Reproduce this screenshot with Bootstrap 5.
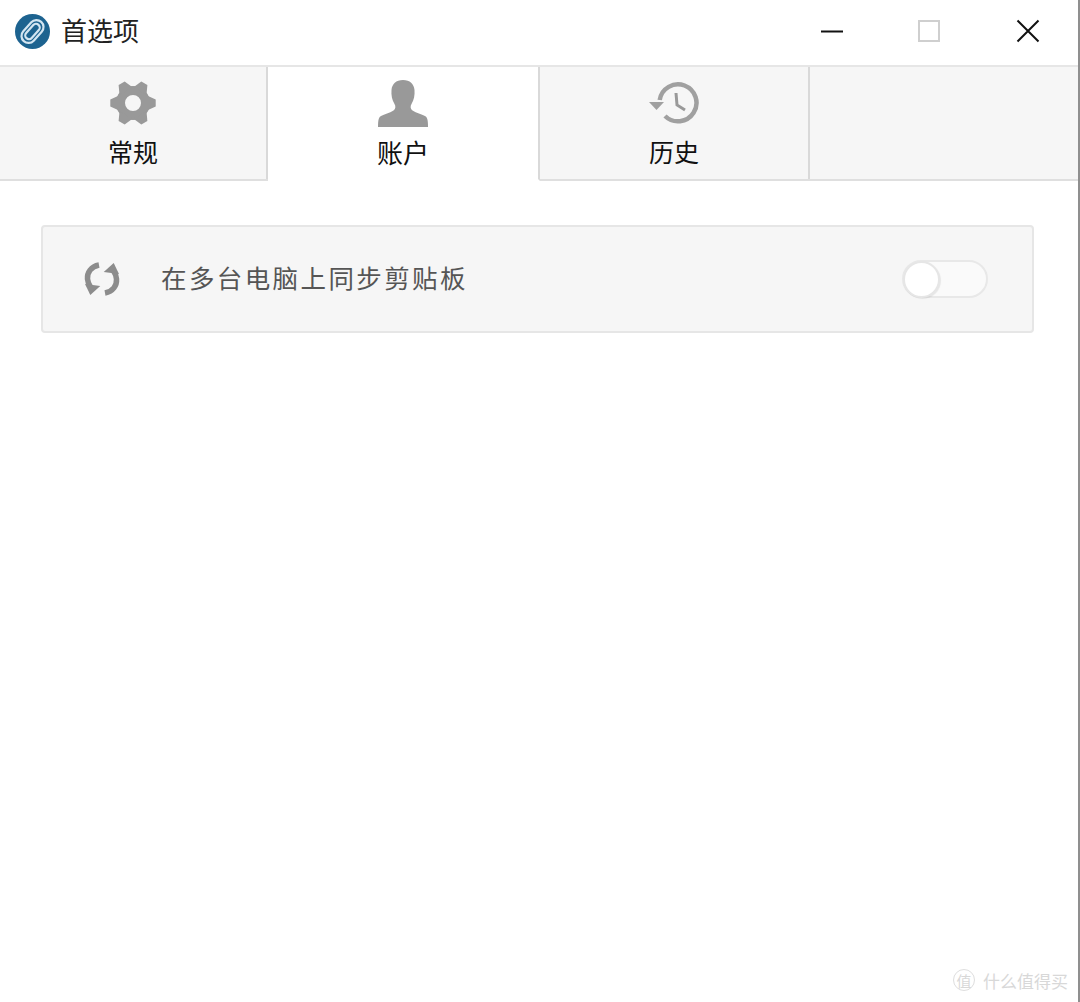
<!DOCTYPE html>
<html lang="zh-CN">

<head>
    <meta charset="UTF-8">
    <meta name="viewport" content="width=device-width, initial-scale=1.0">
    <title>首选项</title>

    <link href="https://cdn.jsdelivr.net/npm/bootstrap@5.3.0/dist/css/bootstrap.min.css" rel="stylesheet">
    <style>
        html, body { height: 100%; }
        body { font-family: "Noto Sans CJK SC", "Liberation Sans", sans-serif; background: #fff; color: #111; }
        .app-window { width: 1080px; height: 1002px; border-right: 2px solid #8f8f8f; }
        .title-bar { height: 65px; padding: 0 0 3px 15px; }
        .title-text { font-size: 26px; line-height: 1; margin: 0 0 3px 11px; color: #222; }
        .win-btn { width: 24px; height: 24px; }
        .win-min { margin-right: 73px; }
        .win-max { margin-right: 75px; }
        .win-close { margin-right: 38px; }
        .tabs { height: 116px; background: #f6f6f6; border-top: 2px solid #e6e6e6; border-bottom: 2px solid #dfdfdf; }
        .tabs .nav-link { height: 112px; padding: 13px 0 0; color: #111; font-size: 25px; line-height: 1; border-right: 2px solid #d9d9d9; border-radius: 0; }
        .tabs .nav-link svg { display: block; margin: 0 auto 13px; }
        .tabs .nav-link.active { background: #fff; color: #111; height: 114px; font-size: 26px; border-bottom: 2px solid #fff; }
        .tabs .nav-link.active svg { margin-bottom: 12px; }
        .tab-1 { width: 268px; }
        .tab-2 { width: 272px; }
        .tab-3 { width: 270px; }
        .pane { padding: 44px 44px 0 41px; }
        .sync-card { height: 108px; background: #f6f6f6; border: 2px solid #e6e6e6; border-radius: 4px; padding: 0 44px 0 40px; }
        .sync-text { font-size: 25.5px; color: #555; margin: 0 0 4px 40px; letter-spacing: 2.4px; line-height: 1; }
        .switch-track { width: 86px; height: 38px; background: #fafafa; border: 2px solid #e8e8e8; border-radius: 19px; position: relative; }
        .switch-knob { width: 37px; height: 37px; background: #fff; border: 2px solid #e6e6e6; border-radius: 50%; position: absolute; left: -1px; top: -1px; box-shadow: 1px 1px 1px rgba(0,0,0,.08); }
        .watermark { position: absolute; right: 10px; bottom: 11px; color: #d8d8d8; font-size: 17px; line-height: 1; }
        .watermark-mark { width: 22px; height: 22px; border: 1px solid #dedede; border-radius: 50%; font-size: 15px; margin-right: 8px; }
    </style>
</head>

<body>

    <div class="app-window position-relative d-flex flex-column">
        <!-- title bar -->
        <div class="title-bar d-flex align-items-center justify-content-between">
            <div class="d-flex align-items-center">
                <svg width="35" height="35" viewBox="0 0 35 35" fill="none">
                    <circle cx="17.5" cy="17.5" r="17.500" fill="#1d6390"/>
                    <g transform="rotate(-48 17.500 17.500)" stroke="#d3e5f1" stroke-width="2.200">
                        <rect x="4.500" y="10.500" width="26" height="14" rx="7"/>
                        <rect x="8.500" y="13.800" width="18" height="7.400" rx="3.700"/>
                    </g>
                </svg>
                <span class="title-text">首选项</span>
            </div>
            <div class="d-flex align-items-center">
                <svg class="win-btn win-min" viewBox="0 0 24 24"><path d="M1 12.500 H23" stroke="#111" stroke-width="2"/></svg>
                <svg class="win-btn win-max" viewBox="0 0 24 24"><rect x="2" y="2" width="20" height="20" fill="none" stroke="#cfcfcf" stroke-width="2"/></svg>
                <svg class="win-btn win-close" viewBox="0 0 24 24"><path d="M1.500 1.500 L22.500 22.500 M22.500 1.500 L1.500 22.500" stroke="#111" stroke-width="2"/></svg>
            </div>
        </div>

        <!-- tabs -->
        <ul class="nav tabs flex-nowrap">
            <li class="nav-item tab-1">
                <a class="nav-link text-center" href="#">
                    <svg width="46" height="46" viewBox="0 0 46 46">
                        <circle cx="23" cy="23" r="12.500" fill="none" stroke="#999" stroke-width="9"/>
                        <g fill="#999">
                            <polygon points="37,15.500 45.700,19.500 45.700,26.500 37,30.500"/>
                            <polygon points="37,15.500 45.700,19.500 45.700,26.500 37,30.500" transform="rotate(60 23 23)"/>
                            <polygon points="37,15.500 45.700,19.500 45.700,26.500 37,30.500" transform="rotate(120 23 23)"/>
                            <polygon points="37,15.500 45.700,19.500 45.700,26.500 37,30.500" transform="rotate(180 23 23)"/>
                            <polygon points="37,15.500 45.700,19.500 45.700,26.500 37,30.500" transform="rotate(240 23 23)"/>
                            <polygon points="37,15.500 45.700,19.500 45.700,26.500 37,30.500" transform="rotate(300 23 23)"/>
                        </g>
                    </svg>
                    <span>常规</span>
                </a>
            </li>
            <li class="nav-item tab-2">
                <a class="nav-link active text-center" href="#">
                    <svg width="50" height="47" viewBox="0 0 50 47">
                        <path fill="#999" d="M25 0c7 0 11 4 11.500 10 .4 5-.5 10-3 14-1.500 2.500-1 5 1 6.500 4 2.500 9 3.500 12.500 5.500 2 1.200 3 3 3 11H0c0-8 1-9.800 3-11 3.500-2 8.500-3 12.500-5.500 2-1.500 2.500-4 1-6.500-2.500-4-3.400-9-3-14C14 4 18 0 25 0z"/>
                    </svg>
                    <span>账户</span>
                </a>
            </li>
            <li class="nav-item tab-3">
                <a class="nav-link text-center" href="#">
                    <svg width="50" height="46" viewBox="0 0 50 46">
                        <path fill="none" stroke="#a0a0a0" stroke-width="4.500" d="M10.700 20A18.500 18.500 0 1 1 16 36"/>
                        <path fill="#a0a0a0" d="M0 22h15l-7.500 8z"/>
                        <path fill="none" stroke="#999" stroke-width="3" d="M27 13l1 12 8 5"/>
                    </svg>
                    <span>历史</span>
                </a>
            </li>
        </ul>

        <!-- account pane -->
        <div class="pane flex-grow-1">
            <div class="sync-card d-flex align-items-center justify-content-between">
                <div class="d-flex align-items-center">
                    <svg width="38" height="36" viewBox="0 0 38 36">
                        <g>
                            <path fill="none" stroke="#8c8c8c" stroke-width="5.500" d="M16 4C8 5.500 4 11.500 4.500 18 4.700 21 6 24 8 27"/>
                            <polygon fill="#8c8c8c" points="2,23 17.300,25 7.300,34"/>
                        </g>
                        <g transform="rotate(180 19 18)">
                            <path fill="none" stroke="#8c8c8c" stroke-width="5.500" d="M16 4C8 5.500 4 11.500 4.500 18 4.700 21 6 24 8 27"/>
                            <polygon fill="#8c8c8c" points="2,23 17.300,25 7.300,34"/>
                        </g>
                    </svg>
                    <span class="sync-text">在多台电脑上同步剪贴板</span>
                </div>
                <div class="switch-track">
                    <div class="switch-knob"></div>
                </div>
            </div>
        </div>

        <!-- watermark -->
        <div class="watermark d-flex align-items-center">
            <span class="watermark-mark d-flex align-items-center justify-content-center">值</span>
            <span>什么值得买</span>
        </div>
    </div>

    <script src="https://cdn.jsdelivr.net/npm/bootstrap@5.3.0/dist/js/bootstrap.bundle.min.js"></script>

</body>

</html>
